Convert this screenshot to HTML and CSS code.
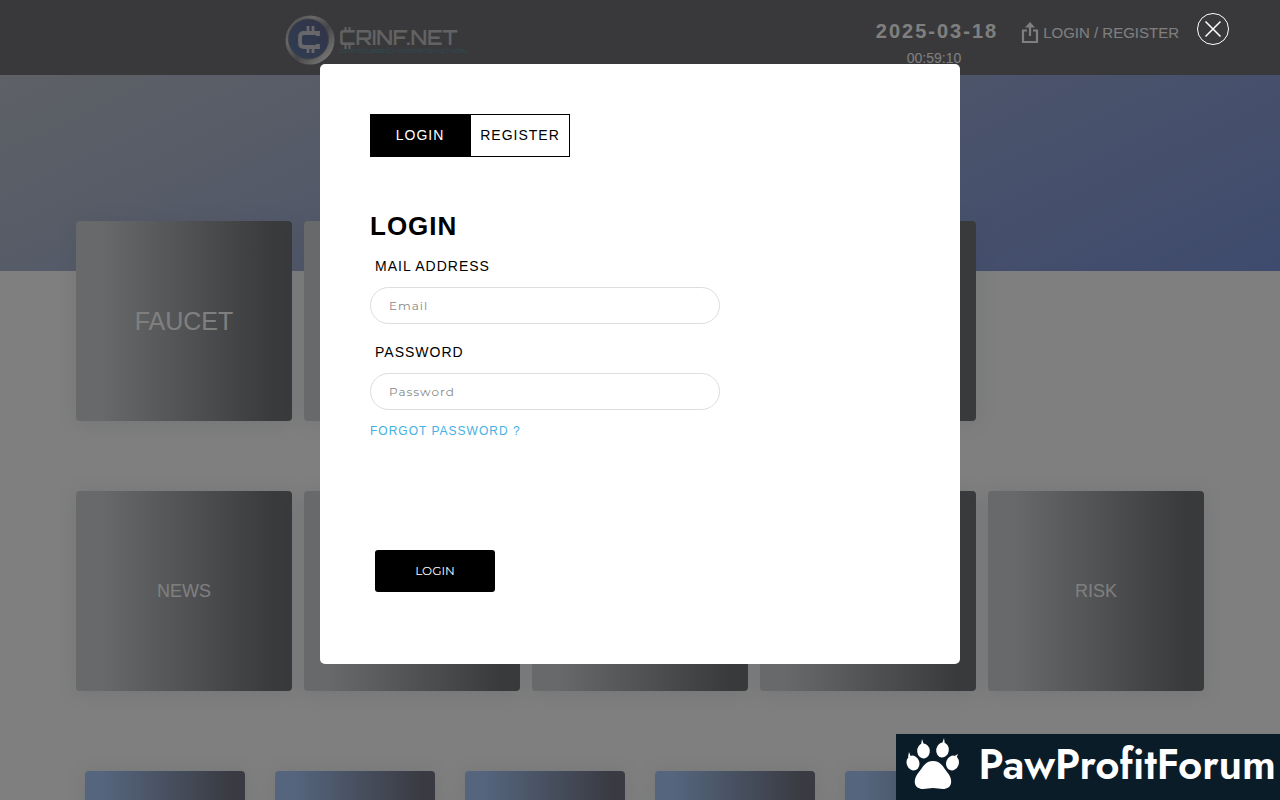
FILE: index.html
```html
<!DOCTYPE html>
<html lang="en">
<head>
<meta charset="utf-8">
<title>CRINF.NET</title>
<link rel="stylesheet" href="styles.css">
</head>
<body>
<header class="header">
  <a class="logo" href="#" aria-label="CRINF.NET home">
    <svg class="logo-mark" viewBox="0 0 50 50" aria-hidden="true">
      <defs>
        <linearGradient id="ring" x1="0" y1="0" x2="1" y2="1">
          <stop offset="0" stop-color="#8c8c92"/><stop offset=".3" stop-color="#d0d0d0"/>
          <stop offset=".55" stop-color="#8e8e92"/><stop offset=".85" stop-color="#e4e4e4"/><stop offset="1" stop-color="#a0a0a0"/>
        </linearGradient>
        <linearGradient id="coin" x1="0" y1="1" x2="1" y2="0">
          <stop offset="0" stop-color="#5c7ca8"/><stop offset="1" stop-color="#66668e"/>
        </linearGradient>
      </defs>
      <circle cx="25" cy="25" r="24.500" fill="url(#ring)"/>
      <circle cx="23.500" cy="24" r="20" fill="url(#coin)" stroke="#85858c"/>
      <path d="M33 21v-3H19q-4 0-4 4v6q0 4 4 4h14v-3" fill="none" stroke="#d0d0d4" stroke-width="3.800"/>
      <path d="M23 17v-6M28 17v-6M23 38v-6M28 38v-6" stroke="#d0d0d4" stroke-width="2.800"/>
    </svg>
    <span class="logo-words">
      <span class="logo-name">CRINF.NET</span>
      <svg class="logo-ticks" viewBox="0 0 10 22" aria-hidden="true">
        <path d="M2.500 0v4M6.500 0v4M2.500 18v4M6.500 18v4" stroke="#c4c4c6" stroke-width="2"/>
      </svg>
      <span class="logo-tag">CRYPTOCURRENCY INFORMATION NETWORK</span>
    </span>
  </a>
  <div class="session">
    <div class="clock">
      <time class="date">2025-03-18</time>
      <time class="time">00:59:10</time>
    </div>
    <a class="account" href="#">
      <svg class="share" viewBox="0 0 18 22" aria-hidden="true">
        <path d="M6 8.500H2V20h14V8.500h-4" fill="none" stroke="currentColor" stroke-width="2.200"/>
        <path d="M9 14V3" stroke="currentColor" stroke-width="2.200"/>
        <path d="M9 0l5 5.500H4z" fill="currentColor"/>
      </svg>
      LOGIN / REGISTER
    </a>
  </div>
</header>
<div class="banner"></div>
<main class="content">
  <section class="tiles">
    <a class="tile large" href="#">FAUCET</a>
    <div class="tile"></div>
    <div class="tile"></div>
    <div class="tile"></div>
  </section>
  <section class="tiles">
    <a class="tile" href="#">NEWS</a>
    <div class="tile"></div>
    <div class="tile"></div>
    <div class="tile"></div>
    <a class="tile" href="#">RISK</a>
  </section>
  <section class="tiles small">
    <div class="tile blue"></div>
    <div class="tile blue"></div>
    <div class="tile blue"></div>
    <div class="tile blue"></div>
    <div class="tile blue"></div>
    <div class="tile blue"></div>
  </section>
</main>

<div class="overlay">
  <button class="close" type="button" aria-label="Close">
    <svg viewBox="0 0 34 34" aria-hidden="true">
      <circle cx="17" cy="17" r="15.500" fill="none" stroke="#fff"/>
      <path d="M9.500 9.500l15 15M24.500 9.500l-15 15" stroke="#fff" stroke-width="1.500"/>
    </svg>
  </button>
  <div class="modal" role="dialog" aria-modal="true" aria-labelledby="modal-title">
    <div class="tabs">
      <button class="tab active" type="button">LOGIN</button>
      <button class="tab" type="button">REGISTER</button>
    </div>
    <form class="form">
      <h2 class="title" id="modal-title">LOGIN</h2>
      <label class="label" for="email">MAIL ADDRESS</label>
      <input class="field" id="email" type="email" placeholder="Email">
      <label class="label" for="password">PASSWORD</label>
      <input class="field" id="password" type="password" placeholder="Password">
      <a class="forgot" href="#">FORGOT PASSWORD ?</a>
      <button class="submit" type="submit">LOGIN</button>
    </form>
  </div>
</div>

<a class="sponsor" href="#">
  <svg class="paw" viewBox="0 0 54 54" aria-hidden="true" fill="#fff">
    <path d="M27 23c8 0 10 6 14 11 7 8 5 17-4 17-4 0-6-1-10-1s-6 1-10 1c-9 0-11-9-4-17 4-5 6-11 14-11z"/>
    <ellipse cx="17.500" cy="13" rx="6.300" ry="7.500" transform="rotate(-6 17.500 13)"/>
    <ellipse cx="36.500" cy="12" rx="6.300" ry="7.500" transform="rotate(8 36.500 12)"/>
    <ellipse cx="7" cy="25" rx="6.300" ry="7.500" transform="rotate(-20 7 25)"/>
    <ellipse cx="46.500" cy="25" rx="6.300" ry="7.500" transform="rotate(20 46.500 25)"/>
    <path d="M15 7l1-6 2 6zM36 6l2-6 1 7zM2 19l1-5 2 5zM47 19l5-3-2 5z"/>
  </svg>
  <span>PawProfitForum</span>
</a>
</body>
</html>
```

FILE: styles.css
```css
* { box-sizing: border-box; }

body {
  margin: 0;
  height: 100vh;
  overflow: hidden;
  background: #fefefe;
  font-family: "Liberation Sans", Arial, sans-serif;
  color: #fff;
}

a { color: inherit; text-decoration: none; }
button, input { font: inherit; }

.header {
  display: flex;
  justify-content: space-between;
  align-items: flex-start;
  height: 75px;
  padding: 15px 101px 0 285px;
  background: #727276;
}

.logo { display: flex; gap: 4px; }
.logo-mark { width: 50px; height: 50px; }
.logo-words { position: relative; display: flex; flex-direction: column; padding-top: 13px; }

.logo-name {
  font: 600 20px/20px Orbitron, "DejaVu Sans", sans-serif;
  color: #c4c4c6;
}

.logo-ticks {
  position: absolute;
  top: 12px;
  left: 4px;
  width: 10px;
  height: 22px;
}

.logo-tag {
  font: 5px/6px Orbitron, "DejaVu Sans", sans-serif;
  color: #5c98b0;
}

.session { display: flex; gap: 23px; }
.clock { display: flex; flex-direction: column; align-items: center; padding-top: 4px; }
.date { font-size: 20px; font-weight: bold; line-height: 24px; letter-spacing: 2px; }
.time { margin-top: 6px; padding-right: 6px; font-size: 14px; line-height: 18px; }

.account { display: flex; gap: 4px; padding-top: 7px; font-size: 15px; line-height: 22px; }
.share { width: 18px; height: 22px; }

.banner {
  height: 196px;
  background: linear-gradient(155deg, #bcc2cc 0%, #7e96dc 100%);
}

.content {
  display: flex;
  flex-direction: column;
  gap: 70px;
  margin-top: -50px;
  padding: 0 76px;
}

.tiles { display: grid; grid-template-columns: repeat(5, 1fr); gap: 12px; }
.tiles.small { grid-template-columns: repeat(6, 1fr); gap: 30px; margin-top: 10px; padding: 0 9px; }

.tile {
  display: flex;
  align-items: center;
  justify-content: center;
  height: 200px;
  border-radius: 4px;
  background: linear-gradient(90deg, #d0d2d6 12%, #727478 92%);
  box-shadow: 0 2px 20px rgba(100, 110, 140, .14);
  font-size: 18px;
}

.tile.large { font-size: 25px; }
.tile.blue { background: linear-gradient(90deg, #aacafa 12%, #747684 92%); }

.overlay {
  position: fixed;
  inset: 0;
  display: flex;
  align-items: flex-start;
  justify-content: center;
  padding-top: 64px;
  background: rgba(0, 0, 0, .5);
}

.close {
  position: absolute;
  top: 12px;
  right: 50px;
  width: 34px;
  height: 34px;
  padding: 0;
  border: 0;
  background: none;
}

.close svg { display: block; }

.modal {
  width: 50%;
  min-height: 600px;
  padding: 50px;
  border-radius: 5px;
  background: #fff;
  color: #000;
}

.tabs { display: flex; width: 200px; border: 1px solid #000; }

.tab {
  flex: 1 1 0;
  height: 41px;
  padding: 0 0 2px;
  border: 0;
  background: #fff;
  color: #000;
  font-size: 14px;
  letter-spacing: 1px;
}

.tab.active { flex: 0 0 100px; padding-right: 2px; background: #000; color: #fff; }

.form { display: flex; flex-direction: column; align-items: flex-start; padding-top: 54px; }
.title { margin: 0 0 16px; font-size: 26px; line-height: 30px; letter-spacing: 1px; }
.label { margin-left: 5px; font-size: 14px; line-height: 18px; letter-spacing: 1px; }

.field {
  width: 350px;
  max-width: 100%;
  height: 37px;
  margin: 12px 0 19px;
  padding: 0 18px;
  border: 1px solid #ddd;
  border-radius: 20px;
  background: #fff;
  font-family: Montserrat, Inter, sans-serif;
  font-size: 12px;
  letter-spacing: 1px;
}

.field::placeholder { color: #888; opacity: 1; }

.forgot { margin-top: -6px; color: #44b0e4; font-size: 12px; line-height: 16px; letter-spacing: 1px; }

.submit {
  width: 120px;
  height: 42px;
  margin: 111px 0 0 5px;
  padding: 0 0 2px;
  border: 0;
  border-radius: 3px;
  background: #000;
  color: #fff;
  font-family: Montserrat, Inter, sans-serif;
  font-size: 12px;
}

.sponsor {
  position: fixed;
  right: 0;
  bottom: 0;
  display: flex;
  align-items: center;
  justify-content: space-between;
  width: 30%;
  min-width: 384px;
  height: 66px;
  padding: 0 4px 4px 10px;
  background: #0b1c29;
  font: 600 42px/60px Jost, Lato, sans-serif;
}

.paw { width: 54px; height: 54px; }
```
